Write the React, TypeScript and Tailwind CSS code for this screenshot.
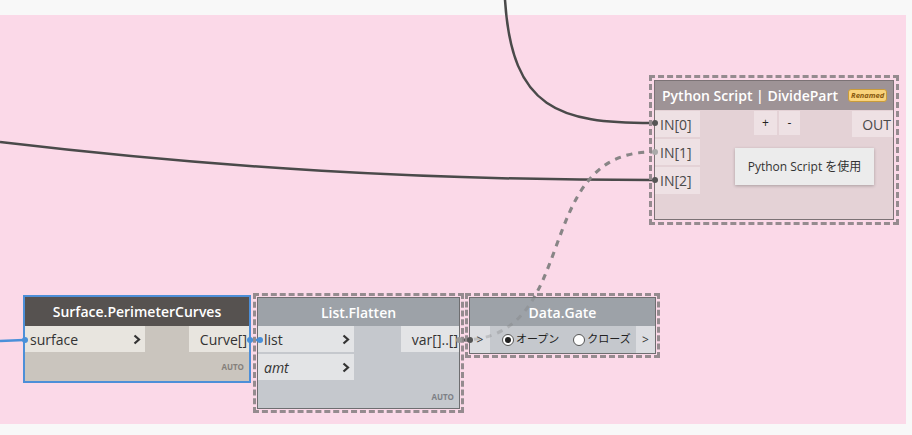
import React from 'react';

const font = { fontFamily: '"Open Sans", "Noto Sans CJK JP", sans-serif' };

function Chevron() {
  return (
    <svg width="8" height="11" viewBox="0 0 8 11" className="shrink-0">
      <path d="M1.5 1.5 L6 5.5 L1.5 9.5" fill="none" stroke="#333" strokeWidth="2.2" />
    </svg>
  );
}

function Wires({ overlay = false }: { overlay?: boolean }) {
  if (overlay) {
    return (
      <svg className="absolute inset-0 pointer-events-none" width="912" height="435">
        <path d="M462 340 C582 340 530 152 652 152" fill="none" stroke="#7a7a7a" strokeWidth="3" strokeDasharray="6 6" opacity="0.3" />
      </svg>
    );
  }
  return (
    <svg className="absolute inset-0 pointer-events-none" width="912" height="435">
      <path d="M505 0 C512 110 560 123 652 123" fill="none" stroke="#4a4a4a" strokeWidth="2.5" />
      <path d="M0 142 C220 168 420 180 652 180" fill="none" stroke="#4a4a4a" strokeWidth="2.5" />
      <path d="M462 340 C582 340 530 152 652 152" fill="none" stroke="#8e8a8c" strokeWidth="3" strokeDasharray="6 6" />
      <path d="M0 341 L24 340" fill="none" stroke="#4a90d9" strokeWidth="2.5" />
      <path d="M249 340 L260 340" fill="none" stroke="#4a90d9" strokeWidth="2.5" />
      <path d="M459 340 L470 340" fill="none" stroke="#4a4a4a" strokeWidth="2.5" />
    </svg>
  );
}

function PythonNode() {
  return (
    <div className="absolute left-[649px] top-[75px] w-[250px] h-[150px] border-[3px] border-dashed border-[#958b8f] p-[2px]">
      <div className="w-full h-full border border-[#7b7275] bg-[#e4d2d6] flex flex-col">
        <div className="h-[29px] bg-[#9e9396] flex items-center pl-[7px] pr-[4px] gap-[10px]">
          <span className="text-white text-[14px] font-semibold whitespace-nowrap">Python Script | DividePart</span>
          <span className="text-[7.5px] italic font-bold text-[#8a5a10] bg-[#f9d27b] border border-[#c99b3a] rounded-[3px] px-[2px] leading-[11px]">Renamed</span>
        </div>
        <div className="flex flex-1 pt-[1px]">
          <div className="w-[45px] shrink-0 flex flex-col gap-[2px]">
            <div className="h-[26px] bg-[#eee1e4] flex items-center pl-[5px] text-[14px] text-[#4a4a4a]">IN[0]</div>
            <div className="h-[26px] bg-[#eee1e4] flex items-center pl-[5px] text-[14px] text-[#4a4a4a]">IN[1]</div>
            <div className="h-[27px] bg-[#eee1e4] flex items-center pl-[5px] text-[14px] text-[#4a4a4a]">IN[2]</div>
          </div>
          <div className="flex-1 min-w-0 flex flex-col items-start">
            <div className="flex gap-[2px] ml-[54px]">
              <div className="w-[23px] h-[24px] bg-[#eee1e4] flex items-center justify-center text-[12px] text-[#222]">+</div>
              <div className="w-[21px] h-[24px] bg-[#eee1e4] flex items-center justify-center text-[12px] text-[#222]">-</div>
            </div>
            <div className="mt-[13px] ml-[35px] w-[139px] shrink-0 h-[37px] bg-[#ececec] shadow-[0_1px_3px_rgba(0,0,0,0.25)] flex items-center justify-center text-[12px] text-[#333] whitespace-nowrap">
              Python Script を使用
            </div>
          </div>
          <div className="w-[41px] shrink-0 h-[26px] bg-[#eee1e4] flex items-center justify-end pr-[2px] text-[14px] text-[#4a4a4a]">OUT</div>
        </div>
      </div>
    </div>
  );
}

function SurfaceNode() {
  return (
    <div className="absolute left-[23px] top-[295px] w-[228px] h-[88px] border-2 border-[#4d8fd8] bg-[#cac5be] flex flex-col">
      <div className="h-[29px] bg-[#565250] flex items-center justify-center text-white text-[14px] font-semibold">Surface.PerimeterCurves</div>
      <div className="flex justify-between">
        <div className="w-[120px] h-[26px] bg-[#e8e5df] flex items-center justify-between pl-[5px] pr-[4px] text-[14px] text-[#333]">
          surface
          <Chevron />
        </div>
        <div className="w-[60px] h-[26px] bg-[#e8e5df] flex items-center justify-end pr-[2px] text-[14px] text-[#333]">Curve[]</div>
      </div>
      <div className="flex-1 flex items-end justify-end pr-[5px] pb-[8px] text-[8px] font-bold text-[#85807b]">AUTO</div>
    </div>
  );
}

function FlattenNode() {
  return (
    <div className="absolute left-[253px] top-[293px] w-[211px] h-[120px] border-[3px] border-dashed border-[#958b8f] p-[1px]">
      <div className="w-full h-full border border-[#6e6e70] bg-[#c5c8cd] flex flex-col">
        <div className="h-[28px] bg-[#9da2a8] flex items-center justify-center text-white text-[14px] font-semibold">List.Flatten</div>
        <div className="flex justify-between">
          <div className="flex flex-col gap-[2px]">
            <div className="w-[96px] h-[26px] bg-[#e3e4e6] flex items-center justify-between pl-[6px] pr-[4px] text-[14px] text-[#333]">
              list
              <Chevron />
            </div>
            <div className="w-[96px] h-[26px] bg-[#e3e4e6] flex items-center justify-between pl-[6px] pr-[4px] text-[14px] italic text-[#333]">
              amt
              <Chevron />
            </div>
          </div>
          <div className="w-[58px] h-[26px] bg-[#e3e4e6] flex items-center justify-end pr-[1px] text-[14px] text-[#333] whitespace-nowrap">var[]..[]</div>
        </div>
        <div className="flex-1 flex items-end justify-end pr-[5px] pb-[5px] text-[8px] font-bold text-[#7d8086]">AUTO</div>
      </div>
    </div>
  );
}

function GateNode() {
  return (
    <div className="absolute left-[465px] top-[293px] w-[195px] h-[65px] border-[3px] border-dashed border-[#958b8f] p-[1px]">
      <div className="w-full h-full border border-[#6e6e70] bg-[#c5c8cd] flex flex-col">
        <div className="h-[28px] bg-[#9da2a8] flex items-center justify-center text-white text-[14px] font-semibold">Data.Gate</div>
        <div className="flex flex-1 items-stretch">
          <div className="w-[20px] bg-[#dcdde1] flex items-center justify-center text-[12px] text-[#333]">&gt;</div>
          <div className="flex-1 flex items-center pl-[12px] text-[11px] text-[#222] whitespace-nowrap">
            <span className="w-[12px] h-[12px] rounded-full border border-[#555] bg-white flex items-center justify-center shrink-0">
              <span className="w-[6px] h-[6px] rounded-full bg-[#222]" />
            </span>
            <span className="ml-[2px]">オープン</span>
            <span className="ml-[14px] w-[12px] h-[12px] rounded-full border border-[#555] bg-white shrink-0" />
            <span className="ml-[2px]">クローズ</span>
          </div>
          <div className="w-[19px] bg-[#dcdde1] flex items-center justify-center text-[12px] text-[#333]">&gt;</div>
        </div>
      </div>
    </div>
  );
}

function Ports() {
  return (
    <svg className="absolute inset-0 pointer-events-none" width="912" height="435">
      <circle cx="655" cy="123" r="3" fill="#555" />
      <circle cx="655" cy="152" r="3" fill="#aaa" />
      <circle cx="655" cy="180" r="3" fill="#555" />
      <circle cx="25" cy="340" r="3" fill="#4a90d9" />
      <circle cx="250" cy="340" r="3" fill="#4a90d9" />
      <circle cx="260" cy="340" r="3" fill="#4a90d9" />
      <circle cx="459" cy="340" r="3" fill="#999" />
      <circle cx="470" cy="340" r="3" fill="#555" />
    </svg>
  );
}

export default function App() {
  return (
    <div className="relative w-[912px] h-[435px] bg-[#f8f8f8] overflow-hidden" style={font}>
      <div className="mt-[15px] w-[906px] h-[409px] bg-[#fbd9e8]" />
      <Wires />
      <SurfaceNode />
      <FlattenNode />
      <GateNode />
      <PythonNode />
      <Wires overlay />
      <Ports />
    </div>
  );
}
